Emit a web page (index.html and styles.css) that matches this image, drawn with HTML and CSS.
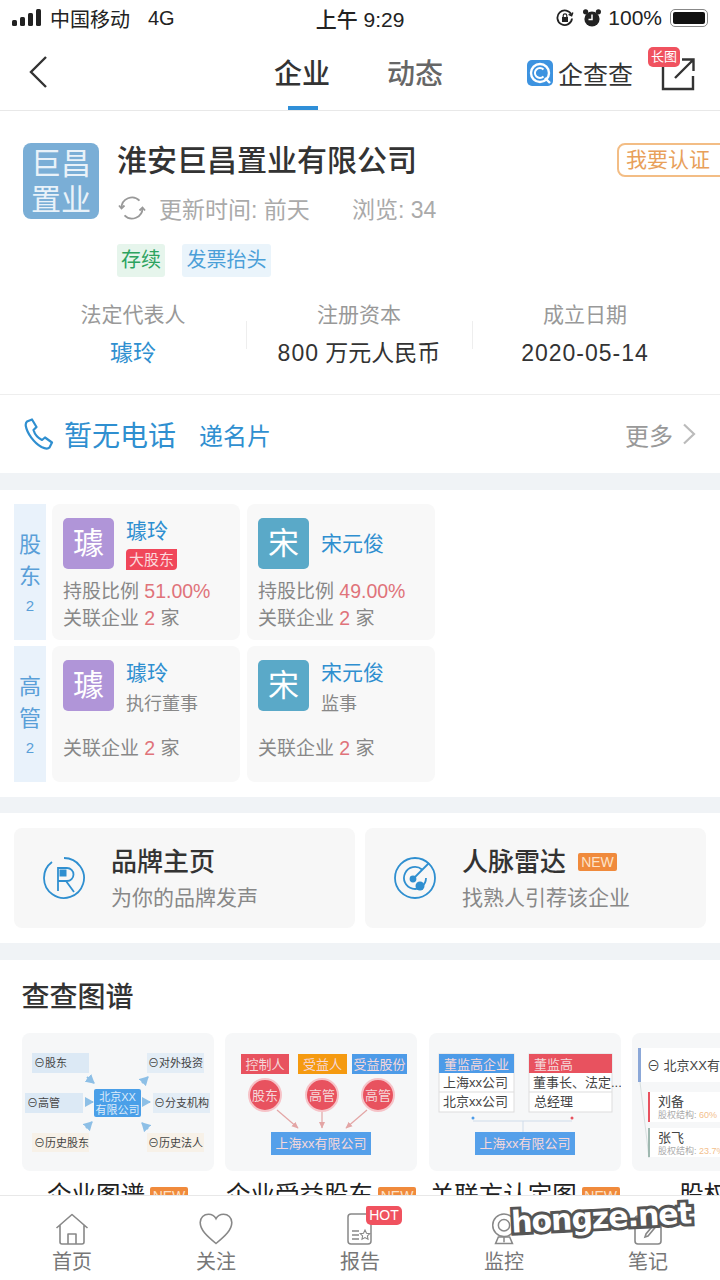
FILE: index.html
```html
<!DOCTYPE html>
<html lang="zh-CN">
<head>
  <meta charset="UTF-8">
  <meta name="viewport" content="width=device-width, initial-scale=1.0">
  <title>淮安巨昌置业有限公司</title>
  <link rel="stylesheet" href="styles.css">
</head>
<body>
<div class="app">
  <div class="status">
    <div class="status-left">
      <svg class="signal" width="30" height="18" viewBox="0 0 30 18"><rect x="0" y="11" width="5" height="6" rx="1.5"/><rect x="8" y="8" width="5" height="9" rx="1.5"/><rect x="16" y="4" width="5" height="13" rx="1.5"/><rect x="24" y="0" width="5" height="17" rx="1.5"/></svg>
      <span>中国移动</span><span class="net">4G</span>
    </div>
    <div class="status-time">上午 9:29</div>
    <div class="status-right">
      <svg width="18" height="18" viewBox="0 0 18 18" fill="none" stroke="#222" stroke-width="1.8"><path d="M15.5 6A7.3 7.3 0 1 0 16 9.5"/><path d="M16.8 3.5 15.6 6.8 12.6 5.4" stroke-width="1.5"/><rect x="6" y="8" width="6" height="5" fill="#222" stroke="none"/><path d="M7.2 8V6.6a1.8 1.8 0 0 1 3.6 0V8" stroke-width="1.2"/></svg>
      <svg width="20" height="20" viewBox="0 0 20 20"><circle cx="10" cy="11" r="7.6" fill="#222"/><circle cx="3.6" cy="3.8" r="2.6" fill="#222"/><circle cx="16.4" cy="3.8" r="2.6" fill="#222"/><path d="M10 6.5V11.5H6.5" fill="none" stroke="#fff" stroke-width="1.5"/></svg>
      <span class="pct">100%</span>
      <div class="battery"><div class="battery-fill"></div></div>
    </div>
  </div>

  <div class="nav">
    <svg class="back" width="20" height="34" viewBox="0 0 20 34" fill="none" stroke="#333" stroke-width="2.4"><path d="M18 2 3 17l15 15"/></svg>
    <div class="nav-tabs">
      <div class="nav-tab on">企业</div>
      <div class="nav-tab">动态</div>
    </div>
    <div class="brand-logo">
      <svg width="26" height="26" viewBox="0 0 26 26" fill="none"><rect width="26" height="26" rx="5" fill="#3d93e0"/><circle cx="13" cy="13" r="9" stroke="#fff" stroke-width="2.4"/><path d="M16.500 9.500a5 5 0 1 0 0 7" stroke="#fff" stroke-width="2"/><path d="M18 18l5 5" stroke="#fff" stroke-width="2.4"/></svg>
      <span>企查查</span>
    </div>
    <div class="share">
      <svg width="34" height="34" viewBox="0 0 34 34" fill="none" stroke="#333" stroke-width="2.4"><path d="M15 5H2v27h30V19"/><path d="M14 21 32 3M21 2.500h11.500V14"/></svg>
      <span class="share-badge">长图</span>
    </div>
  </div>

  <div class="main">
    <section class="head">
      <div class="head-top">
        <div class="logo">巨昌<br>置业</div>
        <div class="head-info">
          <h1 class="company">淮安巨昌置业有限公司</h1>
          <div class="meta">
            <svg width="28" height="28" viewBox="0 0 28 28" fill="none" stroke="#999" stroke-width="1.8"><path d="M3.5 14a10.5 10.5 0 0 1 18-7.4"/><path d="M24.500 14a10.500 10.500 0 0 1-18 7.400"/><path d="M1 11.500l2.500 3 3-3M27 16.500l-2.500-3-3 3"/></svg>
            <span class="meta-time">更新时间: 前天</span>
            <span>浏览: 34</span>
          </div>
          <div class="tags">
            <span class="tag tag-green">存续</span>
            <span class="tag tag-blue">发票抬头</span>
          </div>
        </div>
        <div class="claim">我要认证</div>
      </div>
      <div class="facts">
        <div class="fact"><div class="fact-label">法定代表人</div><div class="fact-value link">璩玲</div></div>
        <div class="fact"><div class="fact-label">注册资本</div><div class="fact-value"><span class="num">800</span> 万元人民币</div></div>
        <div class="fact"><div class="fact-label">成立日期</div><div class="fact-value"><span class="num">2020-05-14</span></div></div>
      </div>
    </section>

    <section class="phone">
      <svg width="30" height="32" viewBox="0 0 30 32" fill="none" stroke="#2f8fd0" stroke-width="2.2" stroke-linejoin="round"><path d="M3 3.500 8 1.500l4.500 7.500-3 3c1 3.500 4.500 8 8.500 10l3-2.500 7 5-2.500 5c-1 1-4 1.500-8-.5C10 25 3 15 1.800 8c-.3-2 .2-3.500 1.200-4.500z"/></svg>
      <span class="phone-none">暂无电话</span>
      <span class="phone-card">递名片</span>
      <span class="phone-more">更多</span>
      <svg width="14" height="22" viewBox="0 0 14 22" fill="none" stroke="#bbb" stroke-width="2.2"><path d="M2 1.500 12 11 2 20.500"/></svg>
    </section>

    <section class="people">
      <div class="people-row">
        <div class="side"><span>股</span><span>东</span><em>2</em></div>
        <div class="person">
          <div class="person-top">
            <div class="avatar purple">璩</div>
            <div class="person-name">
              <div class="name">璩玲</div>
              <span class="major">大股东</span>
            </div>
          </div>
          <div class="line">持股比例 <b>51.00%</b></div>
          <div class="line">关联企业 <b>2</b> 家</div>
        </div>
        <div class="person">
          <div class="person-top">
            <div class="avatar teal">宋</div>
            <div class="person-name"><div class="name">宋元俊</div></div>
          </div>
          <div class="line">持股比例 <b>49.00%</b></div>
          <div class="line">关联企业 <b>2</b> 家</div>
        </div>
      </div>
      <div class="people-row">
        <div class="side"><span>高</span><span>管</span><em>2</em></div>
        <div class="person">
          <div class="person-top">
            <div class="avatar purple">璩</div>
            <div class="person-name with-role">
              <div class="name">璩玲</div>
              <div class="role">执行董事</div>
            </div>
          </div>
          <div class="line line-gap">关联企业 <b>2</b> 家</div>
        </div>
        <div class="person">
          <div class="person-top">
            <div class="avatar teal">宋</div>
            <div class="person-name with-role">
              <div class="name">宋元俊</div>
              <div class="role">监事</div>
            </div>
          </div>
          <div class="line line-gap">关联企业 <b>2</b> 家</div>
        </div>
      </div>
    </section>

    <section class="promo">
      <div class="promo-card">
        <svg width="44" height="44" viewBox="0 0 44 44" fill="none" stroke="#2f8fd0" stroke-width="1.800"><path d="M10 6A20 20 0 1 0 22 2"/><path d="M16 35V12h9a6.500 6.500 0 0 1 0 13h-9M24 25l8 11"/><rect x="17.500" y="13.500" width="7" height="7" fill="#2f8fd0" stroke="none"/></svg>
        <div>
          <div class="promo-title">品牌主页</div>
          <div class="promo-sub">为你的品牌发声</div>
        </div>
      </div>
      <div class="promo-card">
        <svg width="44" height="44" viewBox="0 0 44 44" fill="none" stroke="#2f8fd0" stroke-width="1.800"><circle cx="22" cy="22" r="20"/><path d="M29 13.500A11 11 0 1 0 33 22"/><path d="M20 23 36 7"/><circle cx="20" cy="23" r="2.500" fill="#2f8fd0"/><circle cx="27" cy="30" r="4.500" fill="#2f8fd0" stroke="none"/></svg>
        <div>
          <div class="promo-title">人脉雷达<span class="new-big">NEW</span></div>
          <div class="promo-sub">找熟人引荐该企业</div>
        </div>
      </div>
    </section>

    <section class="graphs">
      <h2 class="graphs-title">查查图谱</h2>
      <div class="graph-list">
        <div class="graph">
          <svg class="thumb" viewBox="0 0 192 138" width="192" height="138">
            <defs>
              <marker id="headBlue" markerWidth="5" markerHeight="5" refX="4" refY="2.500" orient="auto"><path d="M0 0l4.500 2.500L0 5z" fill="#8dbfe6"/></marker>
              <marker id="headRed" markerWidth="6" markerHeight="6" refX="5" refY="3" orient="auto"><path d="M0 .5 5.500 3 0 5.500z" fill="#e3a5a5"/></marker>
            </defs>
            <g class="node-text">
              <rect x="10" y="20" width="57" height="20" fill="#dce9f5"/><text x="12" y="34">⊖股东</text>
              <rect x="3" y="60" width="58" height="20" fill="#dce9f5"/><text x="5" y="74">⊖高管</text>
              <rect x="10" y="100" width="57" height="19" fill="#f7f1e8"/><text x="12" y="114">⊖历史股东</text>
              <rect x="125" y="20" width="57" height="20" fill="#e3edf6"/><text x="126" y="34">⊖对外投资</text>
              <rect x="131" y="60" width="57" height="20" fill="#e3edf6"/><text x="132" y="74">⊖分支机构</text>
              <rect x="125" y="100" width="57" height="19" fill="#f7f1e8"/><text x="126" y="114">⊖历史法人</text>
            </g>
            <rect x="72" y="56" width="47" height="28" rx="2" fill="#4a9fe8"/>
            <text class="node-white" x="95.500" y="68" text-anchor="middle">北京XX</text>
            <text class="node-white" x="95.500" y="81" text-anchor="middle">有限公司</text>
            <g stroke="#8dbfe6" stroke-width="2" fill="none" marker-end="url(#headBlue)">
              <path d="M65 44l7 6" marker-end="url(#headBlue)"/>
              <path d="M63 69h8" marker-end="url(#headBlue)"/>
              <path d="M64 95l6-6" marker-end="url(#headBlue)"/>
              <path d="M120 50l6-6" marker-end="url(#headBlue)"/>
              <path d="M120 69h8" marker-end="url(#headBlue)"/>
              <path d="M126 96l-6-6" marker-end="url(#headBlue)"/>
            </g>
          </svg>
          <div class="graph-name">企业图谱<span class="new">NEW</span></div>
        </div>
        <div class="graph">
          <svg class="thumb" viewBox="0 0 192 138" width="192" height="138">
            <rect x="16" y="21" width="48" height="20" fill="#e8525f"/><text class="node-white big" x="40" y="36" text-anchor="middle">控制人</text>
            <rect x="73" y="21" width="49" height="20" fill="#f59a10"/><text class="node-white big" x="97.500" y="36" text-anchor="middle">受益人</text>
            <rect x="127" y="21" width="55" height="20" fill="#4d9be8"/><text class="node-white big" x="154.500" y="36" text-anchor="middle">受益股份</text>
            <g fill="#e8525f" stroke="#f6c3c8" stroke-width="2">
              <circle cx="40" cy="62" r="16"/><circle cx="97" cy="62" r="16"/><circle cx="153" cy="62" r="16"/>
            </g>
            <text class="node-white big" x="40" y="67" text-anchor="middle">股东</text>
            <text class="node-white big" x="97" y="67" text-anchor="middle">高管</text>
            <text class="node-white big" x="153" y="67" text-anchor="middle">高管</text>
            <g stroke="#e3a5a5" stroke-width="1.200" fill="none">
              <path d="M52 77l21 18" marker-end="url(#headRed)"/>
              <path d="M97 79v16" marker-end="url(#headRed)"/>
              <path d="M142 77l-21 18" marker-end="url(#headRed)"/>
            </g>
            <rect x="46" y="99" width="100" height="23" fill="#55a0ea"/><text class="node-white big" x="96" y="115" text-anchor="middle">上海xx有限公司</text>
          </svg>
          <div class="graph-name">企业受益股东<span class="new">NEW</span></div>
        </div>
        <div class="graph">
          <svg class="thumb" viewBox="0 0 192 138" width="192" height="138">
            <rect x="10" y="21" width="75" height="58" fill="#fff" stroke="#ddd"/>
            <rect x="100" y="21" width="83" height="58" fill="#fff" stroke="#ddd"/>
            <path d="M10 59h75M100 59h83" stroke="#ddd"/>
            <rect x="10" y="21" width="75" height="19" fill="#4d9be8"/>
            <rect x="100" y="21" width="83" height="19" fill="#e8525f"/>
            <text class="node-white big" x="15" y="36">董监高企业</text>
            <text class="node-white big" x="105" y="36">董监高</text>
            <g class="node-text big">
              <text x="14" y="54">上海xx公司</text><text x="14" y="73">北京xx公司</text>
              <text x="104" y="54">董事长、法定...</text><text x="105" y="73">总经理</text>
            </g>
            <path d="M44 88h99M94 88v11" stroke="#cfdcea" fill="none"/>
            <circle cx="44" cy="85" r="1.500" fill="#4d9be8"/><circle cx="143" cy="85" r="1.500" fill="#e8525f"/>
            <rect x="46" y="99" width="100" height="23" fill="#55a0ea"/><text class="node-white big" x="96" y="115" text-anchor="middle">上海xx有限公司</text>
          </svg>
          <div class="graph-name">关联方认定图<span class="new">NEW</span></div>
        </div>
        <div class="graph">
          <svg class="thumb" viewBox="0 0 192 138" width="192" height="138">
            <rect x="6" y="15" width="186" height="34" fill="#fff"/><rect x="6" y="15" width="3" height="34" fill="#8ca8d8"/>
            <text class="node-text big" x="15" y="37">⊖ 北京XX有限公司</text>
            <path d="M8 49l9 76" stroke="#d8e0e0" fill="none"/>
            <rect x="16" y="59" width="176" height="30" fill="#fff"/><rect x="16" y="59" width="2" height="30" fill="#e8525f"/>
            <text class="node-text big" x="26" y="73">刘备</text><text class="tiny" x="26" y="85">股权结构: <tspan fill="#f3c08c">60%</tspan></text>
            <rect x="16" y="95" width="176" height="29" fill="#fff"/><rect x="16" y="95" width="2" height="29" fill="#9fb8b0"/>
            <text class="node-text big" x="26" y="109">张飞</text><text class="tiny" x="26" y="121">股权结构: <tspan fill="#f3c08c">23.7%</tspan></text>
          </svg>
          <div class="graph-name">股权结构</div>
        </div>
      </div>
    </section>
  </div>

  <div class="tabbar">
    <div class="tab">
      <svg width="34" height="32" viewBox="0 0 34 32" fill="none" stroke="#888" stroke-width="1.600" stroke-linejoin="round"><path d="M1.500 15 17 1.500 32.500 15M5 12v17a2 2 0 0 0 2 2h20a2 2 0 0 0 2-2V12"/><path d="M13 31V21h8v10"/></svg>
      <span>首页</span>
    </div>
    <div class="tab">
      <svg width="34" height="32" viewBox="0 0 34 32" fill="none" stroke="#888" stroke-width="1.600"><path d="M17 30.500C8 23 1.200 17 1.200 9.500 1.200 4.500 5 1.200 9.500 1.200c3.200 0 6 1.700 7.500 4.500 1.500-2.800 4.300-4.500 7.500-4.500 4.500 0 8.300 3.300 8.300 8.300C32.800 17 26 23 17 30.500z"/></svg>
      <span>关注</span>
    </div>
    <div class="tab">
      <svg width="34" height="32" viewBox="0 0 34 32" fill="none" stroke="#888" stroke-width="1.500"><rect x="5" y="1" width="23" height="30" rx="3"/><path d="M9 18h7M9 22h7M9 26h7"/><path d="M22 17l1.500 3.200 3.300.4-2.400 2.300.6 3.300-3-1.600-3 1.600.6-3.300-2.400-2.300 3.300-.4z" stroke-width="1.100"/></svg>
      <span>报告</span>
      <span class="hot">HOT</span>
    </div>
    <div class="tab">
      <svg width="34" height="34" viewBox="0 0 34 34" fill="none" stroke="#888" stroke-width="1.600"><circle cx="17" cy="13" r="12"/><circle cx="17" cy="13" r="6"/><path d="M17 25v6M8 32.500h18l-3-7H11z"/></svg>
      <span>监控</span>
    </div>
    <div class="tab">
      <svg width="34" height="32" viewBox="0 0 34 32" fill="none" stroke="#888" stroke-width="1.600"><rect x="4" y="3" width="26" height="28" rx="3"/><path d="M14 24l3-1 10-12-2-2-10 12z"/></svg>
      <span>笔记</span>
    </div>
  </div>

  <div class="watermark">hongze.net</div>
</div>
</body>
</html>
```

FILE: styles.css
```css
* { box-sizing: border-box; }
html, body { margin: 0; padding: 0; }
body { font-family: "Liberation Sans", "Noto Sans CJK SC", sans-serif; color: #333; background: #fff; }
.app { position: relative; width: 720px; height: 1280px; overflow: hidden; display: flex; flex-direction: column; background: #fff; }

/* status bar */
.status { height: 36px; flex: none; display: flex; align-items: center; justify-content: space-between; padding: 0 12px; position: relative; font-size: 20px; color: #222; }
.status-left { display: flex; align-items: center; width: 200px; }
.signal { fill: #222; margin-right: 8px; }
.net { margin-left: 18px; }
.status-time { font-size: 21px; font-weight: 500; }
.status-right { width: 200px; display: flex; align-items: center; justify-content: flex-end; gap: 8px; }
.pct { font-size: 21px; margin-left: -2px; }
.battery { width: 38px; height: 18px; border: 1.500px solid #888; border-radius: 5px; padding: 2px; }
.battery-fill { height: 100%; background: #111; border-radius: 2px; }

/* nav */
.nav { height: 75px; flex: none; display: flex; align-items: center; position: relative; padding: 0 25px 0 28px; border-bottom: 1px solid #e8e8e8; }
.back { margin-top: -2px; }
.nav-tabs { display: flex; gap: 56px; margin-left: 226px; align-self: stretch; }
.nav-tab { font-size: 28px; font-weight: 500; color: #666; line-height: 78px; position: relative; width: 57px; white-space: nowrap; }
.nav-tab.on { color: #333; }
.nav-tab.on::after { content: ""; position: absolute; left: 14px; bottom: 0; width: 30px; height: 4px; background: #2f8fd8; }
.brand-logo { display: flex; align-items: center; gap: 5px; margin-left: 83px; font-size: 25px; color: #333; }
.brand-logo span { white-space: nowrap; }
.share { margin-left: auto; position: relative; height: 34px; margin-top: 2px; }
.share svg { display: block; }
.share-badge { position: absolute; left: -13px; top: -10px; width: 32px; height: 20px; border-radius: 5px; background: #f0525f; color: #fff; font-size: 13px; line-height: 20px; text-align: center; }

.main { flex: 1; min-height: 0; overflow: hidden; background: #f0f3f6; }

/* company head */
.head { background: #fff; height: 284px; padding-top: 32px; border-bottom: 1px solid #eee; }
.head-top { display: flex; padding-left: 23px; position: relative; height: 134px; }
.logo { width: 76px; height: 76px; border-radius: 8px; background: #7aaed6; color: #e9f2f9; font-size: 30px; line-height: 36px; text-align: center; padding-top: 3px; flex: none; }
.head-info { margin-left: 18px; }
.company { margin: 0; font-size: 30px; font-weight: 500; line-height: 36px; color: #333; }
.meta { display: flex; align-items: center; margin-top: 12px; font-size: 23px; color: #aaa; height: 34px; }
.meta svg { margin-right: 13px; margin-left: 1px; }
.meta-time { width: 193px; }
.tags { display: flex; gap: 17px; margin-top: 19px; }
.tag { height: 33px; line-height: 33px; padding: 0 4px; font-size: 20px; border-radius: 3px; }
.tag-green { background: #e6f5ec; color: #2da35f; }
.tag-blue { background: #eaf4fb; color: #4a9fd8; padding: 0 4.500px; }
.claim { position: absolute; left: 617px; top: 0; width: 110px; height: 34px; border: 2px solid #f3bd85; border-radius: 8px; color: #e8a05a; font-size: 21px; line-height: 30px; padding-left: 7px; white-space: nowrap; }
.facts { display: flex; padding: 23px 22px 0 20px; }
.fact { width: 226px; text-align: center; position: relative; }
.fact + .fact::before { content: ""; position: absolute; left: 0; top: 21px; width: 1px; height: 28px; background: #eee; }
.fact-label { font-size: 21px; line-height: 30px; color: #999; }
.fact-value { font-size: 23px; line-height: 30px; margin-top: 8px; color: #333; }
.fact-value.link { color: #2f8fd0; }
.num { letter-spacing: 1px; }

/* phone row */
.phone { background: #fff; height: 78px; display: flex; align-items: center; padding: 0 24px; margin-bottom: 17px; }
.phone-none { font-size: 28px; color: #2f8fd0; margin-left: 10px; }
.phone-card { font-size: 24px; color: #2f8fd0; margin-left: 23px; }
.phone-more { font-size: 24px; color: #999; margin-left: auto; margin-right: 9px; }

/* shareholders */
.people { background: #fff; height: 307px; padding: 14px 14px 0; display: flex; flex-direction: column; gap: 6px; margin-bottom: 16px; }
.people-row { display: flex; height: 136px; }
.side { width: 32px; background: #e9f2fb; color: #5a9fd8; font-size: 22px; display: flex; flex-direction: column; align-items: center; justify-content: center; gap: 4px; line-height: 28px; margin-right: 6px; padding-top: 4px; }
.side em { font-style: normal; font-size: 15px; line-height: 22px; }
.person { width: 188px; background: #f8f8f8; border-radius: 8px; padding: 14px 11px 0; margin-right: 7px; }
.person-top { display: flex; height: 51px; margin-bottom: 9px; }
.avatar { width: 51px; height: 51px; border-radius: 5px; color: #fff; font-size: 31px; line-height: 51px; text-align: center; flex: none; }
.purple { background: #b095d8; }
.teal { background: #5aa9c8; }
.person-name { margin-left: 12px; display: flex; flex-direction: column; justify-content: center; align-items: flex-start; }
.person-name.with-role { padding-top: 6px; }
.name { font-size: 21px; line-height: 26px; color: #2f8fd0; white-space: nowrap; }
.major { margin-top: 5px; width: 51px; height: 21px; background: #f0475a; color: #fbd9dc; font-size: 15px; line-height: 21px; text-align: center; border-radius: 4px 0 4px 0; }
.role { margin-top: 5px; font-size: 18px; line-height: 26px; color: #888; white-space: nowrap; }
.line { font-size: 19px; line-height: 26px; color: #888; white-space: nowrap; }
.line b { font-weight: 400; color: #e0737a; font-size: 19.500px; }
.line-gap { margin-top: 24px; }

/* promo cards */
.promo { background: #fff; height: 130px; padding: 15px 14px; display: flex; gap: 10px; margin-bottom: 17px; }
.promo-card { flex: 1; background: #f7f7f7; border-radius: 8px; display: flex; align-items: center; padding-left: 28px; gap: 25px; }
.promo-title { font-size: 26px; font-weight: 500; line-height: 36px; color: #333; display: flex; align-items: center; }
.promo-sub { font-size: 21px; line-height: 30px; margin-top: 3px; color: #888; }
.new-big { margin-left: 12px; width: 39px; height: 18px; background: #f08a3c; color: #fde2c8; font-size: 14px; line-height: 18px; text-align: center; font-weight: 400; border-radius: 2px; }

/* graph cards */
.graphs { background: #fff; height: 240px; padding: 18px 0 0 21.500px; }
.graphs-title { margin: 0 0 15px; font-size: 28px; font-weight: 500; line-height: 40px; color: #333; }
.graph-list { display: flex; gap: 11.600px; }
.graph { width: 192px; flex: none; }
.thumb { display: block; background: #f6f7f8; border-radius: 8px; }
.node-text { font-size: 11px; fill: #444; }
.node-text.big, .node-text .big { font-size: 13px; }
.node-white { font-size: 11px; fill: #dcebfa; }
.node-white.big { font-size: 13px; fill: #f5d8da; }
.tiny { font-size: 9px; fill: #aaa; }
.graph-name { font-size: 24.500px; line-height: 34px; margin-top: 8px; color: #222; display: flex; align-items: center; justify-content: center; white-space: nowrap; }
.new { margin-left: 5px; width: 38px; height: 19px; background: #f08a3c; color: #fde2c8; font-size: 14px; line-height: 19px; text-align: center; border-radius: 2px; flex: none; }

/* bottom tabs */
.tabbar { height: 85px; flex: none; background: #fff; border-top: 1px solid #e8e8e8; display: flex; }
.tab { width: 144px; display: flex; flex-direction: column; align-items: center; position: relative; padding-top: 17px; font-size: 20px; color: #777; }
.tab svg { height: 32px; display: block; }
.tab > span:not(.hot) { line-height: 28px; margin-top: 3px; }
.hot { position: absolute; left: 78px; top: 10px; width: 36px; height: 19px; background: #f0525f; color: #fff; font-size: 14px; line-height: 19px; text-align: center; border-radius: 2px 5px 5px 5px; }

/* image watermark baked into the screenshot */
.watermark { position: absolute; left: 511px; top: 1196px; font-family: "DejaVu Sans", sans-serif; font-weight: 700; font-size: 30px; line-height: 44px; color: #fff; -webkit-text-stroke: 6px #555; paint-order: stroke fill; transform: rotate(-3deg); letter-spacing: -1px; white-space: nowrap; }
```
